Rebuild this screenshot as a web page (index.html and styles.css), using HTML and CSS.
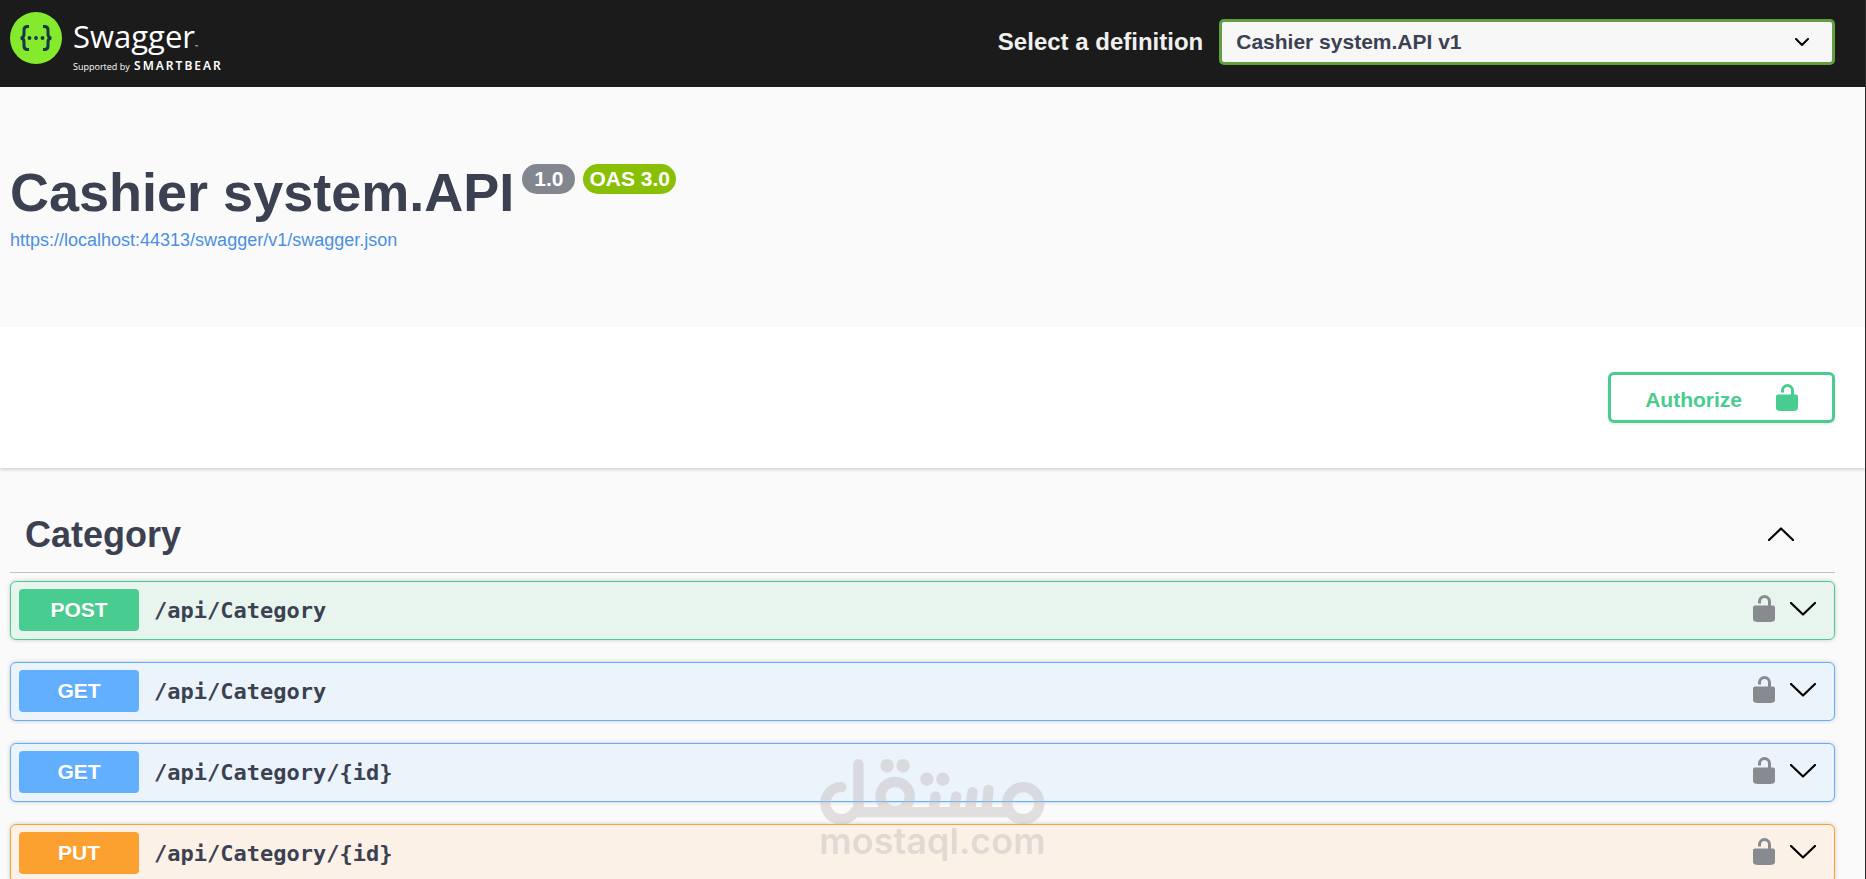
FILE: index.html
```html
<!DOCTYPE html>
<html lang="en">
<head>
<meta charset="utf-8">
<title>Swagger UI</title>
<link rel="stylesheet" href="styles.css">
</head>
<body>
<svg class="sprite" aria-hidden="true">
  <symbol id="unlocked" viewBox="0 0 22 27">
    <path d="M6.500 8.500V6.500a5 5 0 0 1 10 0V12" fill="none" stroke="currentColor" stroke-width="3"/>
    <path d="M2 10.500h18a2 2 0 0 1 2 2V24q0 3-5 3H5q-5 0-5-3V12.500a2 2 0 0 1 2-2z"/>
  </symbol>
  <symbol id="chevron-down" viewBox="0 0 26 14">
    <path d="M1 1l12 11.500L25 1" fill="none" stroke="currentColor" stroke-width="2.200" stroke-linecap="round" stroke-linejoin="round"/>
  </symbol>
  <symbol id="chevron-up" viewBox="0 0 26 14">
    <path d="M1 13L13 1.500L25 13" fill="none" stroke="currentColor" stroke-width="2.200" stroke-linecap="round" stroke-linejoin="round"/>
  </symbol>
</svg>

<header class="topbar">
  <a class="logo" href="#">
    <svg class="logo-mark" viewBox="0 0 52 52" aria-hidden="true">
      <circle cx="26" cy="26" r="26" fill="#85ea2d"/>
      <g fill="none" stroke="#173647" stroke-width="3">
        <path d="M19 14.500h-1.500c-2.500 0-3.500 1.200-3.500 3.500v4c0 2.500-1 4-3.500 4c2.500 0 3.500 1.500 3.500 4v4c0 2.300 1 3.500 3.500 3.500H19"/>
        <path d="M33 14.500h1.500c2.500 0 3.500 1.200 3.500 3.500v4c0 2.500 1 4 3.500 4c-2.500 0-3.500 1.500-3.500 4v4c0 2.300-1 3.500-3.500 3.500H33"/>
      </g>
      <g fill="#173647"><circle cx="19.500" cy="26" r="1.900"/><circle cx="26" cy="26" r="1.900"/><circle cx="32.500" cy="26" r="1.900"/></g>
    </svg>
    <span class="logo-text">
      <span class="logo-name">Swagger<span class="logo-tm">™</span></span>
      <span class="logo-support">Supported by <span class="logo-brand">SMARTBEAR</span></span>
    </span>
  </a>
  <form class="definition">
    <label class="definition-label" for="definition">Select a definition</label>
    <span class="select-box">
      <select class="select" id="definition"><option>Cashier system.API v1</option></select>
      <svg class="select-arrow" viewBox="0 0 14 8" aria-hidden="true"><path d="M1 1l6 6l6-6" fill="none" stroke="#000" stroke-width="2" stroke-linecap="round" stroke-linejoin="round"/></svg>
    </span>
  </form>
</header>

<main>
  <section class="info">
    <div class="info-heading">
      <h1 class="title">Cashier system.API</h1>
      <span class="badge">1.0</span>
      <span class="badge badge-oas">OAS 3.0</span>
    </div>
    <a class="info-link" href="#">https://localhost:44313/swagger/v1/swagger.json</a>
  </section>

  <section class="schemes">
    <button class="authorize" type="button"><span class="authorize-text">Authorize</span> <svg class="lock" aria-hidden="true"><use href="#unlocked"/></svg></button>
  </section>

  <section class="tag">
    <div class="tag-heading">
      <h2 class="tag-title">Category</h2>
      <button class="icon-button" type="button" aria-label="Collapse Category"><svg class="chevron"><use href="#chevron-up"/></svg></button>
    </div>
    <div class="operations">
      <div class="operation post">
        <span class="method">POST</span><a class="path" href="#">/api/Category</a>
        <button class="icon-button" type="button" aria-label="Authorization"><svg class="lock lock-muted"><use href="#unlocked"/></svg></button>
        <button class="icon-button" type="button" aria-label="Expand"><svg class="chevron"><use href="#chevron-down"/></svg></button>
      </div>
      <div class="operation get">
        <span class="method">GET</span><a class="path" href="#">/api/Category</a>
        <button class="icon-button" type="button" aria-label="Authorization"><svg class="lock lock-muted"><use href="#unlocked"/></svg></button>
        <button class="icon-button" type="button" aria-label="Expand"><svg class="chevron"><use href="#chevron-down"/></svg></button>
      </div>
      <div class="operation get">
        <span class="method">GET</span><a class="path" href="#">/api/Category/{id}</a>
        <button class="icon-button" type="button" aria-label="Authorization"><svg class="lock lock-muted"><use href="#unlocked"/></svg></button>
        <button class="icon-button" type="button" aria-label="Expand"><svg class="chevron"><use href="#chevron-down"/></svg></button>
      </div>
      <div class="operation put">
        <span class="method">PUT</span><a class="path" href="#">/api/Category/{id}</a>
        <button class="icon-button" type="button" aria-label="Authorization"><svg class="lock lock-muted"><use href="#unlocked"/></svg></button>
        <button class="icon-button" type="button" aria-label="Expand"><svg class="chevron"><use href="#chevron-down"/></svg></button>
      </div>
    </div>
  </section>
</main>

<div class="watermark">
  <svg class="watermark-logo" viewBox="122 112 674 200" role="img" aria-label="مستقل">
    <g fill="none" stroke="currentColor" stroke-width="31" stroke-linecap="round">
      <path d="M186 199a48 48 0 1 0 40 75H692"/>
      <path d="M237 130V262"/>
      <circle cx="347" cy="227" r="44"/>
      <path d="M468 227l-5 34M530 227l-5 34M579 214l-7 47M627 207l-6 54"/>
      <circle cx="731" cy="247" r="48"/>
    </g>
    <g fill="currentColor"><circle cx="323" cy="135" r="20"/><circle cx="371" cy="135" r="20"/><circle cx="442" cy="175" r="20"/><circle cx="490" cy="175" r="20"/></g>
  </svg>
  <span class="watermark-text">mostaql.com</span>
</div>
</body>
</html>
```

FILE: styles.css
```css
*, *::before, *::after { box-sizing: border-box; }

html { height: 100%; overflow: hidden; }

body {
  min-height: 100%;
  margin: 0;
  border-right: 1px solid #2b2b2b;
  background: #fafafa;
  color: #3b4151;
  font-family: "Liberation Sans", Arial, sans-serif;
}

h1, h2 { margin: 0; }
a { text-decoration: none; }
svg { display: block; }
.sprite { position: absolute; width: 0; height: 0; }

.topbar {
  display: flex;
  align-items: center;
  justify-content: space-between;
  padding: 10px 30px 12px 10px;
  background: #1b1b1b;
}

.logo { display: flex; gap: 11px; height: 65px; padding-top: 2px; color: #fff; font-family: "Open Sans", sans-serif; }
.logo-mark { width: 52px; height: 52px; }
.logo-text { display: flex; flex-direction: column; gap: 4px; padding-top: 6px; }
.logo-name { font-size: 31px; line-height: 36px; }
.logo-tm { font-size: 4px; line-height: 4px; }
.logo-support { font-size: 9px; line-height: 18px; }
.logo-brand { margin-left: 2px; font-family: "Noto Sans", sans-serif; font-size: 12px; font-weight: 600; line-height: 12px; letter-spacing: 2px; }

.definition { display: flex; align-items: center; gap: 16px; margin-bottom: 2px; }
.definition-label { color: #f0f0f0; font-size: 24px; font-weight: 700; }
.select-box { position: relative; width: 33vw; }
.select {
  display: block;
  width: 100%;
  height: 46px;
  padding: 0 48px 0 14px;
  border: 3px solid #62a03f;
  border-radius: 5px;
  appearance: none;
  background: #f7f7f7;
  color: #3b4151;
  font: 700 21px "Liberation Sans", Arial, sans-serif;
}
.select-arrow { position: absolute; top: 19px; right: 26px; width: 14px; height: 8px; pointer-events: none; }

.info { padding: 75px 30px 75px 10px; }
.info-heading { display: flex; align-items: flex-start; gap: 8px; }
.title { font-size: 54px; line-height: 60px; }
.badge {
  margin-top: 2px;
  padding: 0 12px;
  border-radius: 15px;
  background: #82878f;
  color: #fff;
  font-size: 21px;
  font-weight: 700;
  line-height: 30px;
}
.badge-oas { padding: 0 6px; background: #89bf04; }
.info-link { display: block; margin-top: 6px; color: #4990e2; font-size: 18px; line-height: 24px; }

.schemes {
  display: flex;
  justify-content: flex-end;
  padding: 45px 30px;
  background: #fff;
  box-shadow: 0 2px 3px rgba(0, 0, 0, .15);
}
.authorize {
  display: flex;
  align-items: center;
  gap: 34px;
  height: 51px;
  padding: 0 34px;
  border: 3px solid #49cc90;
  border-radius: 6px;
  background: transparent;
  box-shadow: 0 1px 3px rgba(0, 0, 0, .1);
  color: #49cc90;
  font: 700 21px "Liberation Sans", Arial, sans-serif;
}
.authorize-text { padding-top: 4px; }
.lock { width: 22px; height: 27px; fill: currentColor; }
.lock-muted { margin-bottom: 4px; color: #878b90; }

.tag { padding: 30px 30px 30px 10px; }
.tag-heading {
  display: flex;
  align-items: center;
  justify-content: space-between;
  padding: 15px 41px 15px 15px;
  border-bottom: 1px solid #bfc0c3;
}
.tag-title { font-size: 36px; line-height: 44px; }
.icon-button { padding: 0; border: 0; background: transparent; color: #000; }
.chevron { width: 26px; height: 14px; margin-bottom: 2px; }

.operations { display: grid; gap: 22px; padding-top: 8px; }
.operation {
  display: flex;
  align-items: center;
  gap: 15px;
  padding: 7px 18px 8px 8px;
  border: 1px solid;
  border-radius: 6px;
  box-shadow: 0 0 4px rgba(0, 0, 0, .2);
}
.method {
  width: 120px;
  border-radius: 4px;
  color: #fff;
  font-size: 21px;
  font-weight: 700;
  line-height: 42px;
  text-align: center;
  text-shadow: 0 1px 0 rgba(0, 0, 0, .1);
}
.path { flex: 1; color: #3b4151; font: 700 22px "DejaVu Sans Mono", monospace; }
.post { border-color: #49cc90; background: #e7f5ee; }
.post .method { background: #49cc90; }
.get { border-color: #61affe; background: #ebf3fb; }
.get .method { background: #61affe; }
.put { border-color: #fca130; background: #fbf1e6; }
.put .method { background: #fca130; }

.watermark {
  position: fixed;
  top: 758px;
  left: 0;
  right: 1px;
  display: flex;
  flex-direction: column;
  align-items: center;
  color: #c0bcbe;
  opacity: .44;
  pointer-events: none;
}
.watermark-logo { width: 225px; height: 67px; }
.watermark-text { font: 600 36px/32px Inter, sans-serif; }
```
